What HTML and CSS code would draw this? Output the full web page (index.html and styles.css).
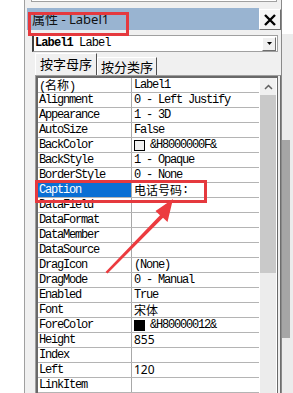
FILE: index.html
```html
<!DOCTYPE html>
<html lang="zh-CN">
<head>
<meta charset="UTF-8">
<meta name="viewport" content="width=device-width, initial-scale=1.0">
<title>属性 - Label1</title>
<link rel="stylesheet" href="styles.css">
</head>
<body>
    <div class="screen">
        <div class="gutter"></div>
        <div class="panel">
            <div class="prev"></div>
            <div class="titlebar">
                <div class="title"><span class="cjk">属性</span> - Label1</div>
                <div class="close">
                    <svg width="12" height="12" viewBox="0 0 12 12"><path d="M1 1L11 11M11 1L1 11" stroke="#000" stroke-width="2.4"/></svg>
                </div>
            </div>
            <div class="combo">
                <div class="combo-text"><b>Label1</b> Label</div>
                <div class="combo-btn">
                    <svg width="5" height="3" viewBox="0 0 5 3"><path d="M0 0H5L2.5 3Z" fill="#000"/></svg>
                </div>
            </div>
            <div class="tabs">
                <div class="tab active">按字母序</div>
                <div class="tab">按分类序</div>
            </div>
            <div class="grid">
                <div class="grid-body">
                    <div class="rows">
                        <div class="row"><div class="name">(<span class="cjk">名称</span>)</div><div class="value">Label1</div></div>
                        <div class="row"><div class="name">Alignment</div><div class="value">0 - Left Justify</div></div>
                        <div class="row"><div class="name">Appearance</div><div class="value">1 - 3D</div></div>
                        <div class="row"><div class="name">AutoSize</div><div class="value">False</div></div>
                        <div class="row"><div class="name">BackColor</div><div class="value"><span class="swatch light"></span>&amp;H8000000F&amp;</div></div>
                        <div class="row"><div class="name">BackStyle</div><div class="value">1 - Opaque</div></div>
                        <div class="row"><div class="name">BorderStyle</div><div class="value">0 - None</div></div>
                        <div class="row selected"><div class="name">Caption</div><div class="value"><span class="cjk">电话号码</span>:</div></div>
                        <div class="row"><div class="name">DataField</div><div class="value"></div></div>
                        <div class="row"><div class="name">DataFormat</div><div class="value"></div></div>
                        <div class="row"><div class="name">DataMember</div><div class="value"></div></div>
                        <div class="row"><div class="name">DataSource</div><div class="value"></div></div>
                        <div class="row"><div class="name">DragIcon</div><div class="value">(None)</div></div>
                        <div class="row"><div class="name">DragMode</div><div class="value">0 - Manual</div></div>
                        <div class="row"><div class="name">Enabled</div><div class="value">True</div></div>
                        <div class="row"><div class="name">Font</div><div class="value"><span class="cjk">宋体</span></div></div>
                        <div class="row"><div class="name">ForeColor</div><div class="value"><span class="swatch dark"></span>&amp;H80000012&amp;</div></div>
                        <div class="row"><div class="name">Height</div><div class="value num">855</div></div>
                        <div class="row"><div class="name">Index</div><div class="value"></div></div>
                        <div class="row"><div class="name">Left</div><div class="value num">120</div></div>
                        <div class="row"><div class="name">LinkItem</div><div class="value"></div></div>
                    </div>
                    <div class="vscroll">
                        <div class="up">
                            <svg width="9" height="6" viewBox="0 0 9 6"><path d="M1 5L4.5 1.5L8 5" stroke="#606060" stroke-width="1.5" fill="none"/></svg>
                        </div>
                        <div class="thumb"></div>
                    </div>
                </div>
            </div>
        </div>
        <div class="outer-bar"><div class="outer-thumb"></div></div>

        <div class="mark mark-title"></div>
        <div class="mark mark-caption"></div>
        <svg class="arrow" width="293" height="393" viewBox="0 0 293 393">
            <polygon points="173,199 167.5,222 163,217.8 107.5,273.5 105.5,272 160,215.2 155.5,211" fill="#ec3b3f"/>
        </svg>
    </div>
</body>
</html>
```

FILE: styles.css
```css
body {
    margin: 0;
    background: #fff;
}
.screen {
    position: relative;
    display: flex;
    width: 293px;
    height: 393px;
    overflow: hidden;
}
.gutter {
    width: 24px;
    background: #fff;
}
.panel {
    display: flex;
    flex-direction: column;
    width: 256px;
    border-left: 1px solid #a0a0a0;
    border-right: 1px solid #8a8a8a;
    background: #f0f0f0;
}
.prev {
    height: 3px;
    margin: 0 4px 0 6px;
    background: #fff;
    border: 1px solid #a0a0a0;
    border-top: none;
}
.titlebar {
    display: flex;
    align-items: flex-end;
    margin-top: 6px;
    padding-left: 2px;
    height: 22px;
}
.title {
    flex: 1;
    height: 22px;
    line-height: 22px;
    padding-left: 5px;
    background: #99b4d1;
    font-family: "Noto Sans", "Noto Sans CJK SC", sans-serif;
    font-size: 13px;
    color: #111;
    white-space: pre;
}
.close {
    display: flex;
    align-items: center;
    justify-content: center;
    width: 20px;
    height: 19px;
    background: #f4f4f4;
    border: 1px solid;
    border-color: #fff #6e6e6e #6e6e6e #fff;
}
.combo {
    display: flex;
    align-items: center;
    height: 15px;
    margin: 5px 3px 0 7px;
    background: #fff;
    border: 1px solid #a0a0a0;
    border-left: 2px solid #404040;
}
.combo-text {
    flex: 1;
    padding-left: 1px;
    font-family: "Liberation Mono", monospace;
    font-size: 12px;
    letter-spacing: -0.9px;
    line-height: 15px;
}
.combo-btn {
    display: flex;
    align-items: center;
    justify-content: center;
    width: 12px;
    height: 12px;
    margin-right: 1px;
    background: #f0f0f0;
    border: 1px solid;
    border-color: #fff #6e6e6e #6e6e6e #fff;
}
.tabs {
    display: flex;
    align-items: flex-end;
    height: 21px;
    margin: 2px 0 0 10px;
}
.tab {
    height: 17px;
    padding: 0 3px;
    line-height: 17px;
    font-family: "Noto Sans CJK SC", sans-serif;
    font-size: 13px;
    border-left: 1px solid #fff;
    border-top: 1px solid #fff;
    border-right: 1px solid #505050;
}
.tab.active {
    height: 21px;
    line-height: 20px;
    padding: 0 4px 0 4px;
}
.grid {
    flex: 1;
    margin-left: 10px;
    border-left: 1px solid #a0a0a0;
    border-top: 1px solid #a0a0a0;
    border-right: 1px solid #6e6e6e;
    padding-right: 2px;
}
.grid-body {
    display: flex;
    height: 100%;
    border-left: 2px solid #696969;
    border-top: 2px solid #696969;
    border-right: 1px solid #696969;
    background: #fff;
}
.rows {
    width: 221px;
    font-family: "Liberation Mono", "Noto Sans CJK SC", monospace;
    font-size: 12px;
    letter-spacing: -1.2px;
    color: #000;
}
.row {
    display: flex;
    height: 14px;
    border-bottom: 1px solid #b4b4b4;
}
.name {
    width: 92px;
    padding-left: 1px;
    line-height: 14px;
    border-right: 1px solid #a8a8a8;
    white-space: nowrap;
}
.value {
    flex: 1;
    display: flex;
    align-items: center;
    padding-left: 2px;
    line-height: 14px;
    white-space: nowrap;
}
.cjk {
    font-family: "Noto Sans CJK SC", sans-serif;
    letter-spacing: 0;
}
.num {
    font-family: "Noto Sans", sans-serif;
    letter-spacing: 0;
}
.selected .name {
    background: #0a6fd4;
    color: #fff;
}
.swatch {
    width: 9px;
    height: 9px;
    margin-right: 5px;
    border: 1px solid #000;
}
.swatch.light {
    background: #f0f0f0;
}
.swatch.dark {
    background: #000;
}
.vscroll {
    width: 16px;
    margin-left: 1px;
    background: #ececec;
}
.up {
    display: flex;
    align-items: center;
    justify-content: center;
    height: 17px;
    background: #f0f0f0;
}
.thumb {
    height: 178px;
    background: #c9c9c9;
}
.outer-bar {
    width: 11px;
    padding-top: 140px;
    background: linear-gradient(#fff 0, #fff 34px, #ececec 34px);
}
.outer-thumb {
    width: 8px;
    height: 198px;
    background: #a6a6a6;
}
.mark {
    position: absolute;
    border: 3px solid #e5393e;
    box-sizing: border-box;
}
.mark-title {
    left: 28px;
    top: 12px;
    width: 101px;
    height: 24px;
}
.mark-caption {
    left: 35px;
    top: 180px;
    width: 172px;
    height: 23px;
}
.arrow {
    position: absolute;
    left: 0;
    top: 0;
}
```
